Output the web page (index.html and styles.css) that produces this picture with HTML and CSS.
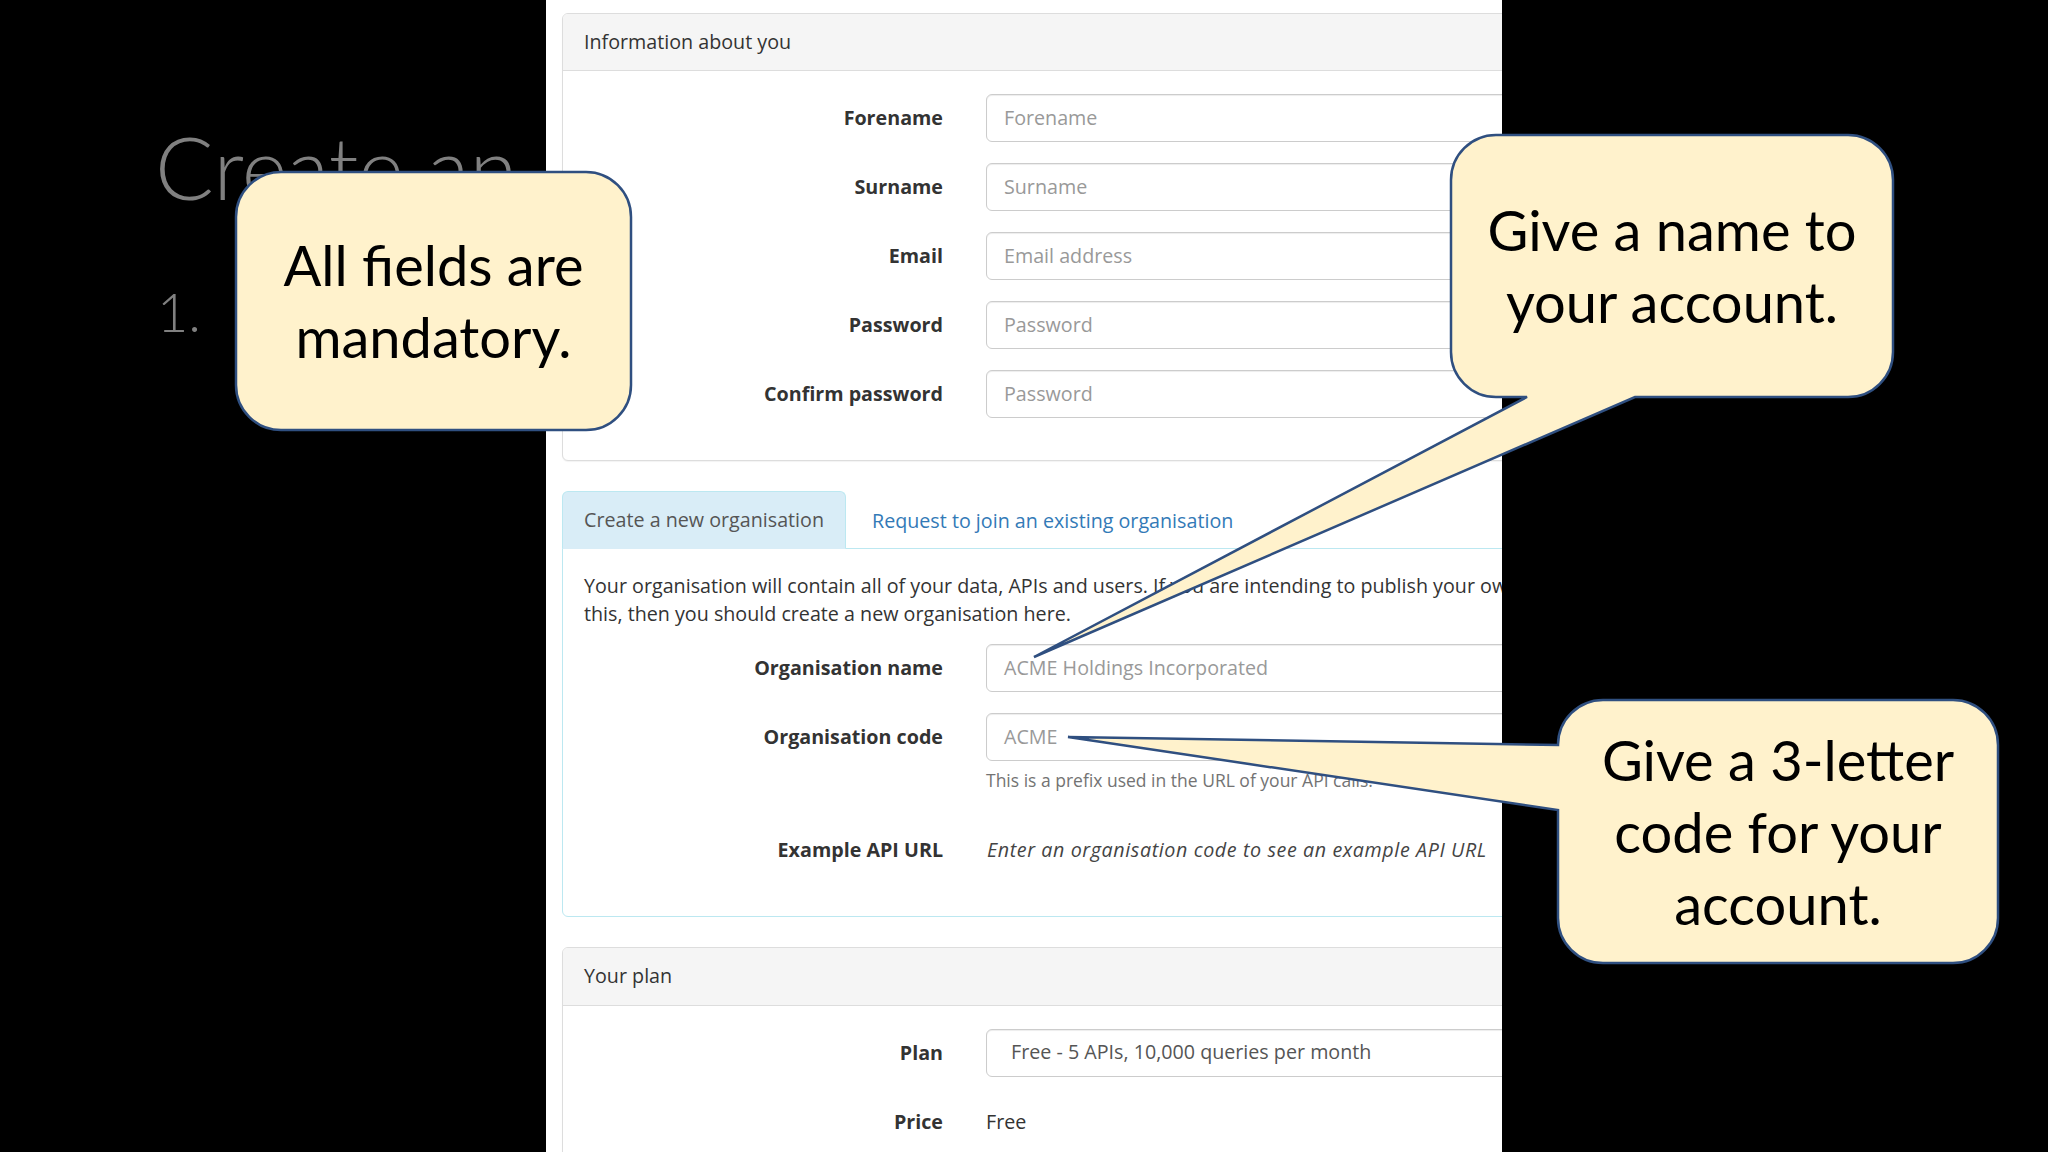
FILE: index.html
```html
<!DOCTYPE html>
<html lang="en">
<head>
<meta charset="utf-8">
<title>Create an account</title>
<link rel="stylesheet" href="styles.css">
</head>
<body>
<div class="slide">
  <div class="slide-text">
    <h1 class="title">Create an</h1>
    <div class="step">1.</div>
  </div>

  <div class="shot">
    <div class="shot-inner">
      <div class="panel panel-first">
        <div class="panel-heading">Information about you</div>
        <div class="panel-body">
          <div class="form-row"><label class="label">Forename</label><div class="input">Forename</div></div>
          <div class="form-row"><label class="label">Surname</label><div class="input">Surname</div></div>
          <div class="form-row"><label class="label">Email</label><div class="input">Email address</div></div>
          <div class="form-row"><label class="label">Password</label><div class="input">Password</div></div>
          <div class="form-row"><label class="label">Confirm password</label><div class="input">Password</div></div>
        </div>
      </div>

      <div class="tabs">
        <div class="tab tab-active">Create a new organisation</div>
        <div class="tab tab-link">Request to join an existing organisation</div>
      </div>
      <div class="tab-content">
        <p class="intro">Your organisation will contain all of your data, APIs and users. If you are intending to publish your own APIs or want to invite other users to collaborate with you on<br>this, then you should create a new organisation here.</p>
        <div class="form-row"><label class="label">Organisation name</label><div class="input">ACME Holdings Incorporated</div></div>
        <div class="form-row">
          <label class="label">Organisation code</label>
          <div class="field">
            <div class="input">ACME</div>
            <div class="help">This is a prefix used in the URL of your API calls.</div>
          </div>
        </div>
        <div class="form-row"><label class="label">Example API URL</label><div class="static static-em">Enter an organisation code to see an example API URL</div></div>
      </div>

      <div class="panel">
        <div class="panel-heading">Your plan</div>
        <div class="panel-body">
          <div class="form-row"><label class="label">Plan</label><div class="input select">Free - 5 APIs, 10,000 queries per month</div></div>
          <div class="form-row"><label class="label">Price</label><div class="static">Free</div></div>
        </div>
      </div>
    </div>
  </div>

  <svg class="bubbles" width="2048" height="1152" viewBox="0 0 2048 1152" xmlns="http://www.w3.org/2000/svg">
    <rect class="bubble" x="236" y="172" width="395" height="258" rx="45" ry="45"/>
    <path class="bubble" d="M1496,135 H1848 A45,45 0 0 1 1893,180 V352 A45,45 0 0 1 1848,397 H1635 L1034,657 L1527,397 H1496 A45,45 0 0 1 1451,352 V180 A45,45 0 0 1 1496,135 Z"/>
    <path class="bubble" d="M1603,700 H1953 A45,45 0 0 1 1998,745 V918 A45,45 0 0 1 1953,963 H1603 A45,45 0 0 1 1558,918 V810 L1068,737 L1558,745 A45,45 0 0 1 1603,700 Z"/>
  </svg>

  <div class="note note-1">All fields are<br>mandatory.</div>
  <div class="note note-2">Give a name to<br>your account.</div>
  <div class="note note-3">Give a 3-letter<br>code for your<br>account.</div>
</div>
</body>
</html>
```

FILE: styles.css
```css
html, body {
  margin: 0;
  padding: 0;
  background: #000;
}

.slide {
  position: relative;
  width: 2048px;
  height: 1152px;
  overflow: hidden;
  background: #000;
}

/* Slide title and list (under the screenshot) */
.slide-text {
  display: flex;
  flex-direction: column;
  padding: 115px 0 0 155px;
  color: #808080;
  font-family: Lato, "Liberation Sans", sans-serif;
  font-weight: 300;
}

.title {
  margin: 0;
  font-size: 87px;
  line-height: 104px;
  font-weight: 300;
  white-space: nowrap;
}

.step {
  margin-top: 60px;
  padding-left: 2px;
  font-size: 54px;
  line-height: 65px;
}

/* Screenshot of the web form */
.shot {
  position: absolute;
  left: 546px;
  top: 0;
  width: 956px;
  height: 1152px;
  background: #fff;
  overflow: hidden;
  font-family: "Open Sans", "Liberation Sans", sans-serif;
  font-size: 19.7px;
  line-height: 28.2px;
  color: #333;
}

.shot-inner {
  width: 1150px;
  margin-left: 16px;
  padding-top: 13px;
}

.panel {
  border: 1px solid #ddd;
  border-radius: 6px;
  background: #fff;
  box-shadow: 0 1px 1px rgba(0, 0, 0, 0.05);
  margin-bottom: 29px;
}

.panel-first {
  margin-bottom: 30px;
}

.panel-heading {
  background: #f5f5f5;
  border-bottom: 1px solid #ddd;
  border-radius: 5px 5px 0 0;
  padding: 14px 21px;
}

.panel-body {
  padding: 23px 21px 21px;
}

.form-row {
  display: grid;
  grid-template-columns: 359px 1fr;
  column-gap: 43px;
  align-items: start;
  margin-bottom: 21px;
}

.label {
  font-weight: 700;
  text-align: right;
  line-height: 48px;
  white-space: nowrap;
}

.input {
  box-sizing: border-box;
  height: 48px;
  border: 1px solid #ccc;
  border-radius: 6px;
  padding: 0 17px;
  display: flex;
  align-items: center;
  color: #999;
  box-shadow: inset 0 1px 1px rgba(0, 0, 0, 0.075);
  white-space: nowrap;
}

.select {
  padding-left: 24px;
  color: #555;
}

.help {
  margin: 7px 0 12px;
  font-size: 17.5px;
  line-height: 25px;
  color: #737373;
  white-space: nowrap;
}

.static {
  line-height: 48px;
  white-space: nowrap;
}

.static-em {
  font-style: italic;
  color: #444;
  padding-left: 1px;
  letter-spacing: 0.6px;
}

/* Tabs */
.tabs {
  display: flex;
  align-items: flex-end;
  margin-bottom: -1px;
  position: relative;
  z-index: 1;
}

.tab {
  padding: 14px 21px;
  white-space: nowrap;
}

.tab-active {
  background: #d9edf7;
  border: 1px solid #bce8f1;
  border-bottom: 1px solid #d9edf7;
  border-radius: 6px 6px 0 0;
  color: #555;
}

.tab-link {
  margin-left: 5px;
  color: #337ab7;
}

.tab-content {
  border: 1px solid #bce8f1;
  border-radius: 0 6px 6px 6px;
  padding: 22.5px 21px 21px;
  margin-bottom: 30px;
}

.intro {
  margin: 0 0 16px;
  white-space: nowrap;
}

/* Callouts */
.bubbles {
  position: absolute;
  left: 0;
  top: 0;
  pointer-events: none;
}

.bubble {
  fill: #fff2cc;
  stroke: #2f4f80;
  stroke-width: 2.5;
  stroke-linejoin: miter;
}

.note {
  position: absolute;
  display: flex;
  align-items: center;
  justify-content: center;
  text-align: center;
  font-family: Lato, "Liberation Sans", sans-serif;
  font-size: 56px;
  line-height: 72px;
  color: #000;
}

.note-1 {
  left: 236px;
  top: 172px;
  width: 395px;
  height: 258px;
}

.note-2 {
  left: 1451px;
  top: 135px;
  width: 442px;
  height: 262px;
}

.note-3 {
  left: 1558px;
  top: 700px;
  width: 440px;
  height: 263px;
}
```
